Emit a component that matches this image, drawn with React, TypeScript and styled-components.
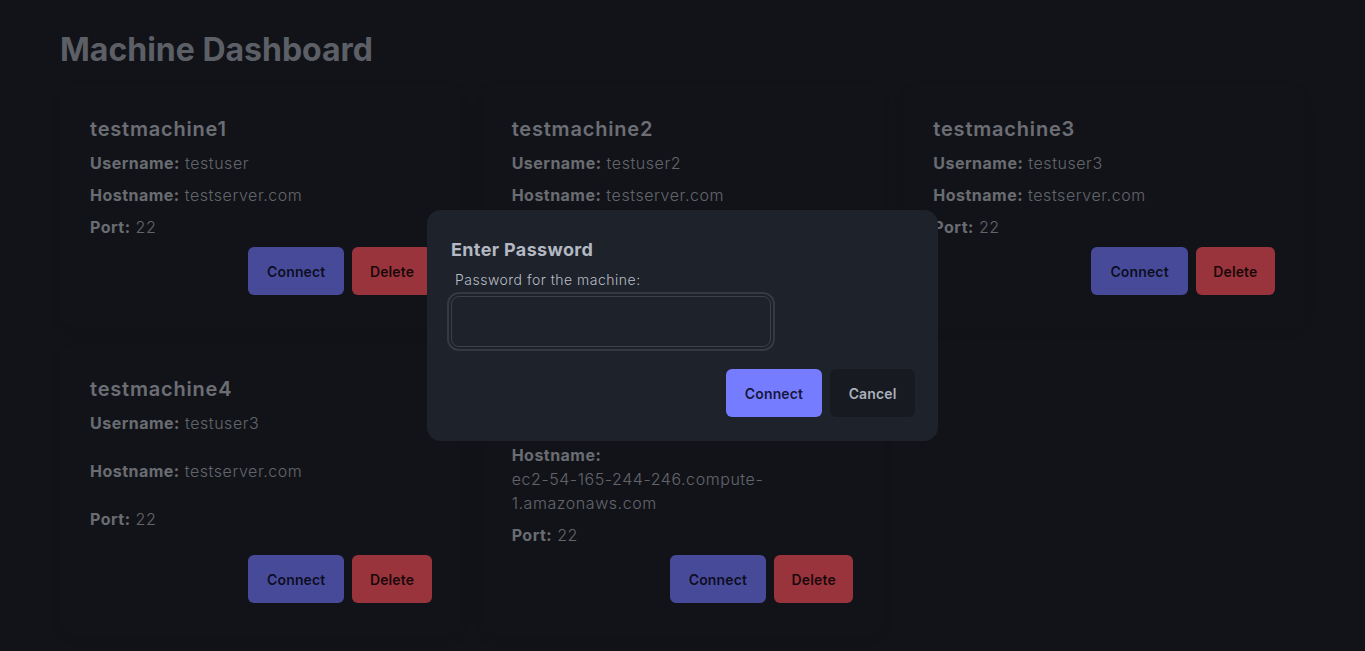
import React from "react";
import styled, { createGlobalStyle } from "styled-components";

const GlobalStyle = createGlobalStyle`
  html, body {
    margin: 0;
    padding: 0;
    background: #1d2029;
  }
  body {
    font-family: Inter, "Noto Sans", sans-serif;
  }
  * {
    box-sizing: border-box;
  }
`;

const Page = styled.main`
  min-height: 651px;
  padding: 31px 60px 30px;
  background: #1d2029;
`;

const Title = styled.h1`
  margin: 0 0 16px;
  font-size: 32px;
  line-height: 38px;
  font-weight: 700;
  color: #9a9faa;
`;

const Grid = styled.div`
  display: grid;
  grid-template-columns: repeat(3, 1fr);
  gap: 18px 20px;
`;

const Card = styled.section`
  display: flex;
  flex-direction: column;
  padding: 32px 30px;
  border-radius: 16px;
  background: #1e212a;
  box-shadow: 0 4px 12px rgba(0, 0, 0, 0.07);
`;

const MachineName = styled.h3`
  margin: 0 0 10px;
  font-size: 20px;
  line-height: 24px;
  font-weight: 600;
  letter-spacing: 0.04em;
  color: #b4b8c2;
`;

const Field = styled.p`
  flex: 1 0 auto;
  margin: 0 0 8px;
  font-size: 16px;
  line-height: 24px;
  font-weight: 300;
  letter-spacing: 0.035em;
  color: #a3a7b0;
`;

const Label = styled.strong`
  font-weight: 700;
  letter-spacing: 0.03em;
  color: #b0b4bd;
`;

const Value = styled.span`
  display: inline-block;
  max-width: 100%;
`;

const Actions = styled.div`
  display: flex;
  justify-content: flex-end;
  gap: 8px;
`;

type Variant = "primary" | "danger" | "ghost";

const bg: Record<Variant, string> = {
  primary: "#767cff",
  danger: "#ff5664",
  ghost: "#171a20",
};

const fg: Record<Variant, string> = {
  primary: "rgba(8, 8, 24, 0.88)",
  danger: "rgba(12, 4, 6, 0.88)",
  ghost: "#a9b0bc",
};

const pad: Record<Variant, string> = {
  primary: "19px",
  danger: "17.5px",
  ghost: "18.5px",
};

const Button = styled.button<{ $variant: Variant }>`
  height: 48px;
  padding: 0 ${(p) => pad[p.$variant]};
  border: 0;
  border-radius: 6px;
  font-family: inherit;
  font-size: 14px;
  font-weight: 600;
  letter-spacing: 0.01em;
  background: ${(p) => bg[p.$variant]};
  color: ${(p) => fg[p.$variant]};
  cursor: pointer;
`;

const Overlay = styled.div`
  position: fixed;
  inset: 0;
  background: rgba(0, 0, 0, 0.4);
  display: flex;
  align-items: center;
  justify-content: center;
`;

const Dialog = styled.div`
  width: 511px;
  padding: 24px 23px 24px 24px;
  border-radius: 14px;
  background: #1e222a;
`;

const DialogTitle = styled.h3`
  margin: 2px 0 6px;
  font-size: 18px;
  line-height: 27px;
  font-weight: 700;
  letter-spacing: 0.02em;
  color: #b3b8c2;
`;

const FieldLabel = styled.label`
  display: block;
  margin: 0 0 6px 4px;
  font-size: 14px;
  line-height: 21px;
  font-weight: 300;
  letter-spacing: 0.035em;
  color: #b9bec7;
`;

const Input = styled.input`
  display: block;
  width: 320px;
  height: 51px;
  padding: 0 12px;
  border: 1px solid #3c4049;
  border-radius: 8px;
  background: #1e222a;
  color: #d0d4dc;
  font-family: inherit;
  font-size: 16px;
  outline: none;
  box-shadow: 0 0 0 2px #1e222a, 0 0 0 4px #353941;
`;

const DialogActions = styled.div`
  display: flex;
  justify-content: flex-end;
  gap: 8px;
  margin-top: 22px;
`;

type Machine = {
  name: string;
  username: string;
  hostname: string;
  port: number;
};

const machines: Machine[] = [
  { name: "testmachine1", username: "testuser", hostname: "testserver.com", port: 22 },
  { name: "testmachine2", username: "testuser2", hostname: "testserver.com", port: 22 },
  { name: "testmachine3", username: "testuser3", hostname: "testserver.com", port: 22 },
  { name: "testmachine4", username: "testuser3", hostname: "testserver.com", port: 22 },
  {
    name: "testmachine5",
    username: "ubuntu",
    hostname: "ec2-54-165-244-246.compute-1.amazonaws.com",
    port: 22,
  },
];

export default function App() {
  return (
    <>
      <GlobalStyle />
      <Page>
        <Title>Machine Dashboard</Title>
        <Grid>
          {machines.map((m) => (
            <Card key={m.name}>
              <MachineName>{m.name}</MachineName>
              <Field>
                <Label>Username:</Label> <Value>{m.username}</Value>
              </Field>
              <Field>
                <Label>Hostname:</Label> <Value>{m.hostname}</Value>
              </Field>
              <Field>
                <Label>Port:</Label> <Value>{m.port}</Value>
              </Field>
              <Actions>
                <Button $variant="primary">Connect</Button>
                <Button $variant="danger">Delete</Button>
              </Actions>
            </Card>
          ))}
        </Grid>
      </Page>
      <Overlay>
        <Dialog>
          <DialogTitle>Enter Password</DialogTitle>
          <FieldLabel htmlFor="pw">Password for the machine:</FieldLabel>
          <Input id="pw" type="password" />
          <DialogActions>
            <Button $variant="primary">Connect</Button>
            <Button $variant="ghost">Cancel</Button>
          </DialogActions>
        </Dialog>
      </Overlay>
    </>
  );
}
